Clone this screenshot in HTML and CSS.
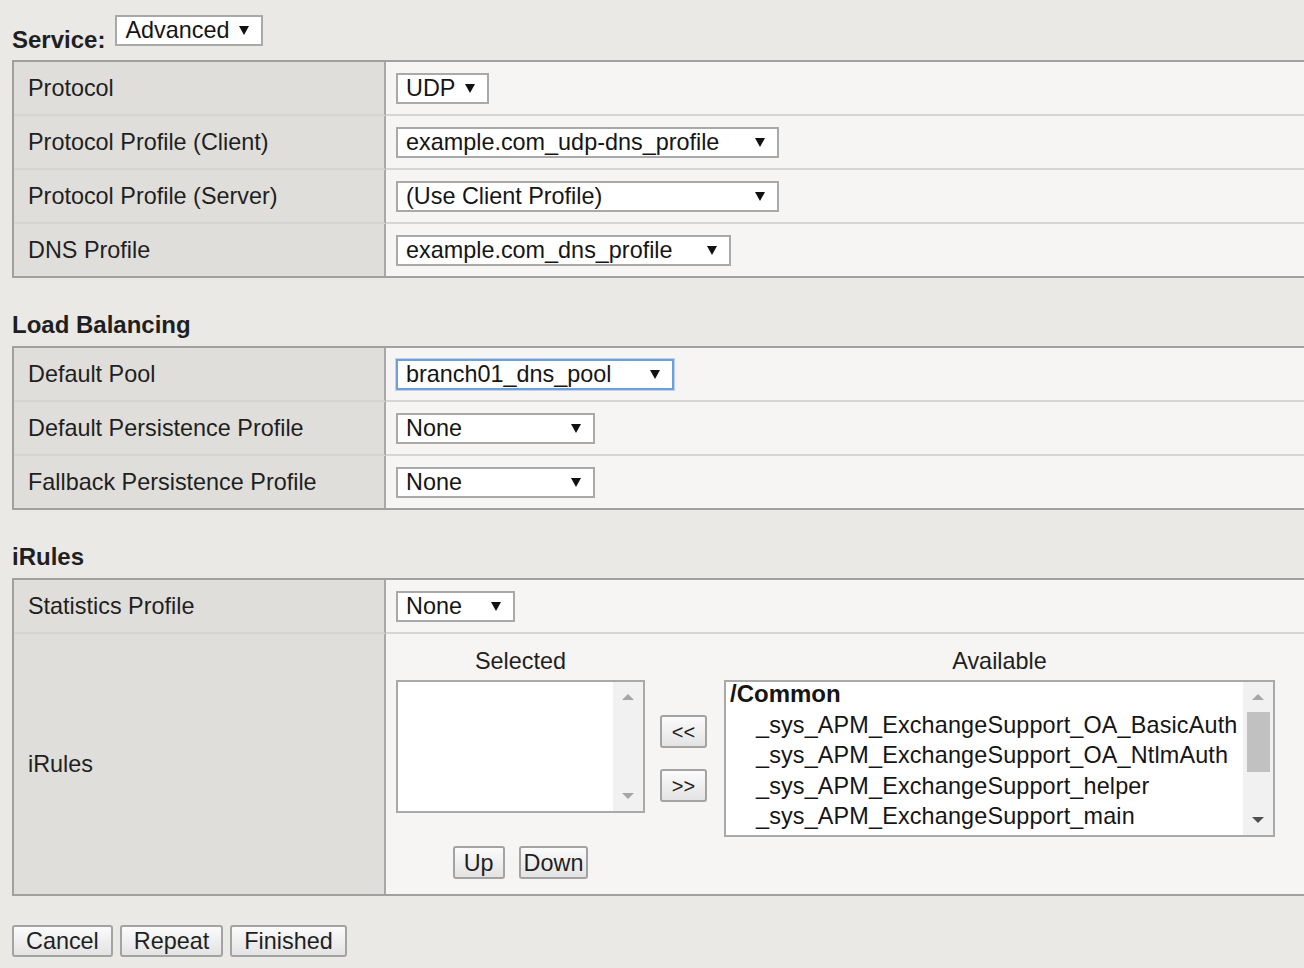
FILE: index.html
```html
<!DOCTYPE html>
<html lang="en">
<head>
<meta charset="utf-8">
<title>Virtual Server - Configuration</title>
<link rel="stylesheet" href="styles.css">
</head>
<body>
<div class="service">
  <span class="service-label">Service:</span>
  <div class="select sel-advanced"><span>Advanced</span><svg class="caret" width="10" height="9" viewBox="0 0 10 9"><polygon points="0,0 10,0 5,9"/></svg></div>
</div>

<table class="form-table">
  <tr>
    <td class="label">Protocol</td>
    <td class="value"><div class="select sel-udp"><span>UDP</span><svg class="caret" width="10" height="9" viewBox="0 0 10 9"><polygon points="0,0 10,0 5,9"/></svg></div></td>
  </tr>
  <tr>
    <td class="label">Protocol Profile (Client)</td>
    <td class="value"><div class="select sel-profile"><span>example.com_udp-dns_profile</span><svg class="caret" width="10" height="9" viewBox="0 0 10 9"><polygon points="0,0 10,0 5,9"/></svg></div></td>
  </tr>
  <tr>
    <td class="label">Protocol Profile (Server)</td>
    <td class="value"><div class="select sel-profile"><span>(Use Client Profile)</span><svg class="caret" width="10" height="9" viewBox="0 0 10 9"><polygon points="0,0 10,0 5,9"/></svg></div></td>
  </tr>
  <tr>
    <td class="label">DNS Profile</td>
    <td class="value"><div class="select sel-dns"><span>example.com_dns_profile</span><svg class="caret" width="10" height="9" viewBox="0 0 10 9"><polygon points="0,0 10,0 5,9"/></svg></div></td>
  </tr>
</table>

<div class="section-title">Load Balancing</div>
<table class="form-table">
  <tr>
    <td class="label">Default Pool</td>
    <td class="value"><div class="select sel-pool focused"><span>branch01_dns_pool</span><svg class="caret" width="10" height="9" viewBox="0 0 10 9"><polygon points="0,0 10,0 5,9"/></svg></div></td>
  </tr>
  <tr>
    <td class="label">Default Persistence Profile</td>
    <td class="value"><div class="select sel-none-wide"><span>None</span><svg class="caret" width="10" height="9" viewBox="0 0 10 9"><polygon points="0,0 10,0 5,9"/></svg></div></td>
  </tr>
  <tr>
    <td class="label">Fallback Persistence Profile</td>
    <td class="value"><div class="select sel-none-wide"><span>None</span><svg class="caret" width="10" height="9" viewBox="0 0 10 9"><polygon points="0,0 10,0 5,9"/></svg></div></td>
  </tr>
</table>

<div class="section-title">iRules</div>
<table class="form-table">
  <tr>
    <td class="label">Statistics Profile</td>
    <td class="value"><div class="select sel-none"><span>None</span><svg class="caret" width="10" height="9" viewBox="0 0 10 9"><polygon points="0,0 10,0 5,9"/></svg></div></td>
  </tr>
  <tr>
    <td class="label">iRules</td>
    <td class="value irules">
      <div class="swap">
        <div class="swap-head col-sel">Selected</div>
        <div class="swap-head col-avail">Available</div>
        <div class="listbox lb-selected col-sel">
          <div class="lb-items"></div>
          <div class="scroll">
            <div class="sb-arrow"><svg width="12" height="6" viewBox="0 0 12 6"><polygon points="6,0 12,6 0,6" fill="#a6a6a6"/></svg></div>
            <div class="sb-arrow"><svg width="12" height="6" viewBox="0 0 12 6"><polygon points="0,0 12,0 6,6" fill="#a6a6a6"/></svg></div>
          </div>
        </div>
        <div class="swap-mid">
          <button class="btn btn-move">&lt;&lt;</button>
          <button class="btn btn-move">&gt;&gt;</button>
        </div>
        <div class="listbox lb-available col-avail">
          <div class="lb-items">
            <div class="opt-group">/Common</div>
            <div class="opt">_sys_APM_ExchangeSupport_OA_BasicAuth</div>
            <div class="opt">_sys_APM_ExchangeSupport_OA_NtlmAuth</div>
            <div class="opt">_sys_APM_ExchangeSupport_helper</div>
            <div class="opt">_sys_APM_ExchangeSupport_main</div>
          </div>
          <div class="scroll">
            <div class="sb-arrow"><svg width="12" height="6" viewBox="0 0 12 6"><polygon points="6,0 12,6 0,6" fill="#a6a6a6"/></svg></div>
            <div class="sb-thumb"></div>
            <div class="sb-space"></div>
            <div class="sb-arrow"><svg width="12" height="6" viewBox="0 0 12 6"><polygon points="0,0 12,0 6,6" fill="#505050"/></svg></div>
          </div>
        </div>
        <div class="order col-sel">
          <button class="btn btn-up">Up</button>
          <button class="btn btn-down">Down</button>
        </div>
      </div>
    </td>
  </tr>
</table>

<div class="actions">
  <button class="btn btn-action">Cancel</button>
  <button class="btn btn-action">Repeat</button>
  <button class="btn btn-action">Finished</button>
</div>
</body>
</html>
```

FILE: styles.css
```css
* { box-sizing: border-box; }

html, body { margin: 0; }

body {
  background: #eae9e6;
  font-family: "Liberation Sans", Arial, Helvetica, sans-serif;
  font-size: 23.4px;
  color: #1f1f1f;
  padding: 15px 0 0 12px;
  width: 1304px;
  height: 968px;
  overflow: hidden;
}

/* Service line */
.service {
  display: flex;
  align-items: flex-start;
  gap: 10px;
  height: 45px;
}

.service-label {
  font-weight: bold;
  font-size: 24px;
  line-height: 28px;
  margin-top: 11px;
}

/* Dropdowns */
.select {
  display: flex;
  align-items: center;
  justify-content: space-between;
  height: 31px;
  border: 2px solid #a9a9a9;
  background: #fff;
  padding: 0 12px 0 8px;
  line-height: 27px;
  color: #151515;
  white-space: nowrap;
}

.caret { fill: #111; flex: none; }

.sel-advanced { width: 148px; }
.sel-udp { width: 93px; }
.sel-profile { width: 383px; }
.sel-dns { width: 335px; }
.sel-pool { width: 278px; }
.sel-none-wide { width: 199px; }
.sel-none { width: 119px; }

.select.focused {
  border-color: #6f9fd8;
  box-shadow: 0 0 0 1px #bcd3ef;
}

/* Property tables */
.form-table {
  width: 100%;
  border-collapse: separate;
  border-spacing: 0;
  border-top: 2px solid #a0a0a0;
  border-left: 2px solid #a0a0a0;
  border-bottom: 2px solid #a0a0a0;
}

.form-table td {
  box-sizing: content-box;
  height: 52px;
  padding: 0;
  vertical-align: middle;
  border-bottom: 2px solid #d6d5d1;
}

.form-table tr:last-child td { border-bottom: 0; }

.form-table .label {
  box-sizing: border-box;
  width: 372px;
  background: #dfdedb;
  border-right: 2px solid #a8a8a8;
  padding-left: 14px;
}

.form-table .value {
  background: #f6f5f3;
  padding-left: 10px;
}

.section-title {
  font-weight: bold;
  font-size: 24px;
  line-height: 28px;
  margin: 33px 0 7px;
}

/* iRules swap widget */
.form-table .value.irules {
  padding: 13px 0 15px 10px;
}

.swap {
  display: grid;
  grid-template-columns: 249px 79px 551px;
  grid-template-rows: auto auto auto;
}

.col-sel { grid-column: 1; }
.col-avail { grid-column: 3; }

.swap-head {
  grid-row: 1;
  text-align: center;
  line-height: 28px;
  margin-bottom: 5px;
}

.listbox {
  grid-row: 2;
  align-self: start;
  display: flex;
  border: 2px solid #a9a9a9;
  background: #fff;
  overflow: hidden;
}

.lb-selected { height: 133px; }
.lb-available { height: 157px; }

.lb-items {
  flex: 1;
  padding-left: 4px;
  line-height: 30.5px;
  margin-top: -3px;
  white-space: nowrap;
  overflow: hidden;
  color: #151515;
}

.opt-group { font-weight: bold; font-size: 24px; }
.opt { padding-left: 26px; letter-spacing: 0.15px; }

.scroll {
  flex: none;
  width: 30px;
  background: #f1f1f1;
  display: flex;
  flex-direction: column;
  justify-content: space-between;
}

.sb-arrow {
  height: 30px;
  display: flex;
  align-items: center;
  justify-content: center;
  flex: none;
}

.sb-thumb {
  height: 60px;
  margin: 0 3px 0 4px;
  background: #c1c1c1;
  flex: none;
}

.sb-space { flex: 1; }

.swap-mid {
  grid-row: 2;
  grid-column: 2;
  align-self: center;
  display: flex;
  flex-direction: column;
  gap: 21px;
  padding-left: 15px;
}

.order {
  grid-row: 3;
  display: flex;
  justify-content: center;
  gap: 14px;
  margin-top: 9px;
}

/* Buttons */
.btn {
  font-family: inherit;
  font-size: 23.4px;
  color: #1f1f1f;
  line-height: 28px;
  height: 33px;
  margin: 0;
  border: 2px solid #a3a3a3;
  border-radius: 3px;
  background: linear-gradient(#fbfbfb, #e3e3e3);
  padding: 0 3px;
  cursor: pointer;
}

.btn-move {
  width: 47px;
  font-size: 20px;
  padding: 0;
}

.btn-up { min-width: 52px; }
.btn-down { padding: 0 3px; }

.actions {
  display: flex;
  gap: 7px;
  margin-top: 29px;
}

.btn-action {
  height: 32px;
  padding: 0 12px;
}
```
